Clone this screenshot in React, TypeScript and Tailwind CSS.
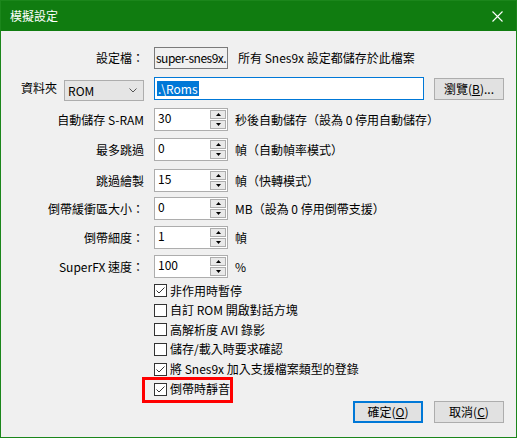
import React from 'react';

// Emulation settings dialog (Snes9x style, Windows 10 chrome)

const spinRows = [
  { label: '自動儲存 S-RAM', value: '30', suffix: '秒後自動儲存（設為 0 停用自動儲存）', mt: 'mt-[8px]' },
  { label: '最多跳過', value: '0', suffix: '幀（自動幀率模式）', mt: 'mt-[7px]' },
  { label: '跳過繪製', value: '15', suffix: '幀（快轉模式）', mt: 'mt-[8px]' },
  { label: '倒帶緩衝區大小：', value: '0', suffix: 'MB（設為 0 停用倒帶支援）', mt: 'mt-[5px]' },
  { label: '倒帶細度：', value: '1', suffix: '幀', mt: 'mt-[6px]' },
  { label: 'SuperFX 速度：', value: '100', suffix: '%', mt: 'mt-[6px]' },
];

const options = [
  { text: '非作用時暫停', checked: true, h: 'h-[19px]' },
  { text: '自訂 ROM 開啟對話方塊', checked: false, h: 'h-[20px]' },
  { text: '高解析度 AVI 錄影', checked: false, h: 'h-[19px]' },
  { text: '儲存/載入時要求確認', checked: false, h: 'h-[20px]' },
  { text: '將 Snes9x 加入支援檔案類型的登錄', checked: true, h: 'h-[20px]' },
];

const Arrow = ({ up }: { up?: boolean }) => (
  <div className="flex-1 border border-[#adadad] bg-[#e9e9e9] flex items-center justify-center">
    <svg width="5" height="3" viewBox="0 0 5 3">
      <polygon points={up ? '0,3 5,3 2.5,0' : '0,0 5,0 2.5,3'} fill="#000" />
    </svg>
  </div>
);

const Spin = ({ value }: { value: string }) => (
  <div className="flex w-[74px] h-[23px] border border-[#adadad] bg-white">
    <div className="flex-1 pl-[3px] pt-[2px] leading-[14px]">{value}</div>
    <div className="w-[17px] flex flex-col gap-[1px] py-[1px] pr-[1px]">
      <Arrow up />
      <Arrow />
    </div>
  </div>
);

const CheckBox = ({ checked }: { checked: boolean }) => (
  <div className="w-[13px] h-[13px] border border-[#333] bg-white flex items-center justify-center">
    {checked && (
      <svg width="11" height="11" viewBox="0 0 11 11">
        <polyline points="1.5,5.5 4,8 9.5,2.5" fill="none" stroke="#333" strokeWidth="1" />
      </svg>
    )}
  </div>
);

const Button = ({ label, hot, primary }: { label: string; hot: string; primary?: boolean }) => (
  <div
    className={`w-[70px] h-[22px] flex items-center justify-center bg-[#e1e1e1] ${
      primary ? 'border-2 border-[#0078d7]' : 'border border-[#adadad]'
    }`}
  >
    {label}(<span className="underline">{hot}</span>)
  </div>
);

export default function App() {
  return (
    <div className="w-[517px] h-[438px] border border-[#1b861b] bg-[#f0f0f0] flex flex-col text-[12px] leading-none text-black font-['Noto_Sans_CJK_TC',sans-serif] overflow-hidden">
      {/* title bar */}
      <div className="h-[30px] shrink-0 bg-[#107c10] flex items-center justify-between pl-[9px] pr-[13px] text-white">
        <span>模擬設定</span>
        <svg width="11" height="11" viewBox="0 0 11 11">
          <path d="M0.5 0.5 L10.5 10.5 M10.5 0.5 L0.5 10.5" stroke="#fff" strokeWidth="1.1" />
        </svg>
      </div>

      <div className="flex-1 flex flex-col pt-[16px]">
        {/* config file */}
        <div className="flex items-center h-[22px]">
          <div className="w-[143px] text-right">設定檔：</div>
          <div className="ml-[10px] w-[74px] h-[22px] border border-[#7a7a7a] flex items-center pl-[1px] overflow-hidden whitespace-nowrap tracking-[-0.5px]">
            super-snes9x.
          </div>
          <div className="ml-[10px]">所有 Snes9x 設定都儲存於此檔案</div>
        </div>

        {/* folder */}
        <div className="flex items-start h-[23px] mt-[8px]">
          <div className="pl-[20px] mt-[5px]">資料夾</div>
          <div className="ml-[7px] mt-[3px] w-[80px] h-[21px] border border-[#adadad] bg-[#e5e5e5] flex items-center justify-between pl-[3px] pr-[6px]">
            <span>ROM</span>
            <svg width="8" height="5" viewBox="0 0 8 5">
              <polyline points="0.5,0.5 4,4 7.5,0.5" fill="none" stroke="#555" strokeWidth="1" />
            </svg>
          </div>
          <div className="ml-[10px] w-[270px] h-[23px] border border-[#0078d7] bg-white flex items-center pl-[2px]">
            <span className="bg-[#0078d7] text-white px-[1px] h-[15px] flex items-center">.\Roms</span>
          </div>
          <div className="ml-[10px] mt-[1px] w-[70px] h-[22px] border border-[#adadad] bg-[#e1e1e1] flex items-center justify-center">
            瀏覽(<span className="underline">B</span>)...
          </div>
        </div>

        {/* numeric settings */}
        {spinRows.map(r => (
          <div key={r.label} className={`flex items-center h-[23px] ${r.mt}`}>
            <div className="w-[143px] text-right whitespace-nowrap">{r.label}</div>
            <div className="ml-[10px]">
              <Spin value={r.value} />
            </div>
            <div className="ml-[7px]">{r.suffix}</div>
          </div>
        ))}

        {/* toggles */}
        <div className="mt-[3px] flex flex-col pl-[153px]">
          {options.map(o => (
            <div key={o.text} className={`flex items-center gap-[3px] ${o.h}`}>
              <CheckBox checked={o.checked} />
              <span>{o.text}</span>
            </div>
          ))}
          <div className="h-[20px] flex items-center">
            <div className="relative flex items-center gap-[3px]">
              <CheckBox checked />
              <span>倒帶時靜音</span>
              <span className="absolute -left-[12px] -top-[6px] w-[91px] h-[26px] border-[3px] border-[#ff0000]" />
            </div>
          </div>
        </div>

        {/* dialog buttons */}
        <div className="mt-[2px] flex justify-end gap-[11px] pr-[12px]">
          <Button label="確定" hot="O" primary />
          <Button label="取消" hot="C" />
        </div>
      </div>
    </div>
  );
}
